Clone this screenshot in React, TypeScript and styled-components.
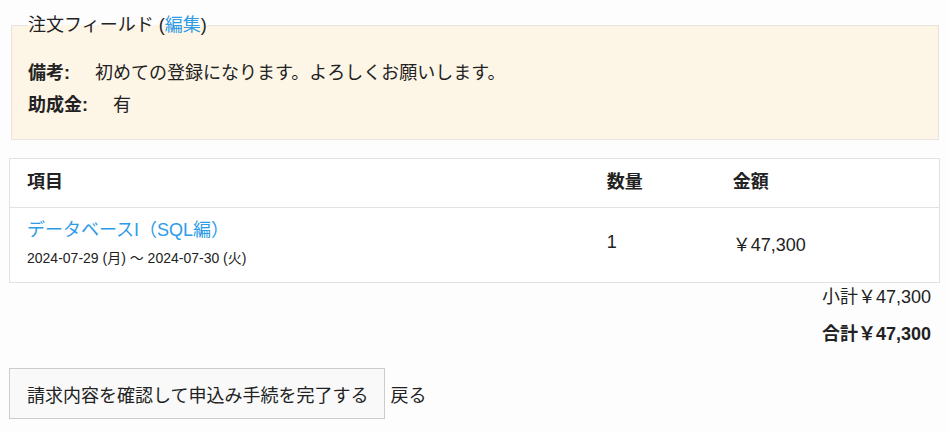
import { createGlobalStyle, styled } from 'styled-components';

const GlobalStyle = createGlobalStyle`
    body {
        margin: 0;
        background: #fdfdfd;
        font-family: 'Liberation Sans', 'Noto Sans CJK JP', sans-serif;
        color: #222;
        font-size: 18px;
    }
`;

const Page = styled.div`
    width: 931px;
    padding: 0 8px 0 9px;
`;

const Fieldset = styled.fieldset`
    margin: 14px 1px 0 2px;
    padding: 21px 16px 18px;
    background: #fdf5e6;
    border: 1px solid #e8e3df;
    min-width: 0;
`;

const Legend = styled.legend`
    padding: 0 1px 0 0;
    margin-left: 0;
    font-size: 18px;
    line-height: 22px;
    color: #222;
`;

const Link = styled.a`
    color: #2d9be8;
    text-decoration: none;
`;

const Field = styled.div`
    display: flex;
    align-items: center;
    height: 32px;
    line-height: 32px;
`;

const Label = styled.span`
    font-weight: bold;
    margin-right: 25px;
`;

const Value = styled.span`
    color: #222;
`;

const Table = styled.table`
    width: 931px;
    margin-top: 18px;
    border-collapse: collapse;
    border: 1px solid #e2e2e2;
    background: #fff;
`;

const Th = styled.th<{ $w: number }>`
    width: ${({ $w }) => $w}px;
    text-align: left;
    font-weight: bold;
    height: 49px;
    padding: 0 17px 6px;
    border-bottom: 1px solid #e2e2e2;
    box-sizing: border-box;
`;

const Td = styled.td`
    height: 69px;
    padding: 0 17px 5px;
    vertical-align: middle;
`;

const ItemName = styled(Link)`
    display: block;
    line-height: 22px;
`;

const Dates = styled.div`
    margin-top: 9px;
    font-size: 14px;
    line-height: 16px;
`;

const Totals = styled.div`
    display: flex;
    flex-direction: column;
    align-items: flex-end;
    padding-right: 9px;
    margin-top: 3px;
`;

const TotalLine = styled.div<{ $bold?: boolean }>`
    font-weight: ${({ $bold }) => ($bold ? 'bold' : 'normal')};
    line-height: 22px;
    margin-bottom: 15px;
`;

const Actions = styled.div`
    display: flex;
    align-items: center;
    gap: 5px;
    margin-top: 8px;
`;

const Button = styled.button`
    font-family: 'Liberation Sans', 'Noto Sans CJK JP', sans-serif;
    font-size: 18px;
    color: #222;
    height: 51px;
    padding: 0 16px 0 17px;
    background: #f9f9f9;
    border: 1px solid #cccccc;
    cursor: pointer;
`;

const Back = styled.a`
    color: #222;
    text-decoration: none;
`;

const App = () => {
    return (
        <>
            <GlobalStyle />
            <Page>
                <Fieldset>
                    <Legend>
                        注文フィールド (<Link href="#">編集</Link>)
                    </Legend>
                    <Field>
                        <Label>備考:</Label>
                        <Value>初めての登録になります。よろしくお願いします。</Value>
                    </Field>
                    <Field>
                        <Label>助成金:</Label>
                        <Value>有</Value>
                    </Field>
                </Fieldset>
                <Table>
                    <thead>
                        <tr>
                            <Th $w={581}>項目</Th>
                            <Th $w={126}>数量</Th>
                            <Th $w={224}>金額</Th>
                        </tr>
                    </thead>
                    <tbody>
                        <tr>
                            <Td>
                                <ItemName href="#">データベースI（SQL編）</ItemName>
                                <Dates>2024-07-29 (月) 〜 2024-07-30 (火)</Dates>
                            </Td>
                            <Td>1</Td>
                            <Td>￥47,300</Td>
                        </tr>
                    </tbody>
                </Table>
                <Totals>
                    <TotalLine>小計￥47,300</TotalLine>
                    <TotalLine $bold>合計￥47,300</TotalLine>
                </Totals>
                <Actions>
                    <Button>請求内容を確認して申込み手続を完了する</Button>
                    <Back href="#">戻る</Back>
                </Actions>
            </Page>
        </>
    );
};

export default App;
